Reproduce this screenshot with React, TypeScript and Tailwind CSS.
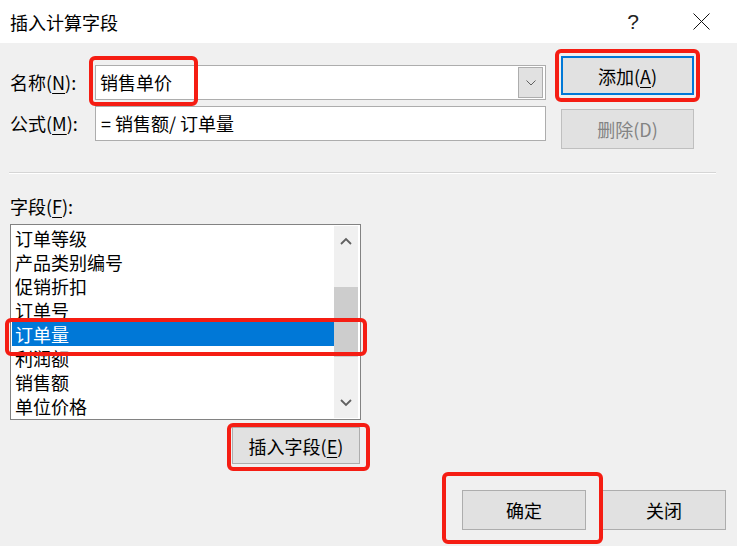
import React from "react";

const font = { fontFamily: '"Noto Sans CJK SC", "Noto Sans", sans-serif' };

function Chevron({ dir }: { dir: "up" | "down" }) {
  return (
    <svg width="12" height="8" viewBox="0 0 12 8">
      {dir === "up" ? (
        <path d="M1 7 L6 2 L11 7" fill="none" stroke="#606060" strokeWidth="1.8" />
      ) : (
        <path d="M1 1 L6 6 L11 1" fill="none" stroke="#606060" strokeWidth="1.8" />
      )}
    </svg>
  );
}

const items = ["订单等级", "产品类别编号", "促销折扣", "订单号", "订单量", "利润额", "销售额", "单位价格"];

function Red({ cls }: { cls: string }) {
  return <div className={"absolute border-[4px] border-[#f51d13] rounded-[6px] pointer-events-none " + cls} />;
}

export default function App() {
  return (
    <div className="w-[737px] h-[546px] bg-[#f0f0f0] relative overflow-hidden text-black text-[18px]" style={font}>
      {/* title bar */}
      <div className="h-[43px] bg-white flex items-center">
        <span className="pl-[10px] leading-[24px]">插入计算字段</span>
        <div className="ml-auto flex items-center">
          <span className="text-[21px] leading-[24px] text-[#222] mr-[54px] font-['Liberation_Sans',sans-serif] font-light">?</span>
          <svg width="17" height="17" viewBox="0 0 17 17" className="mr-[27px]">
            <path d="M0.5 0.5 L16.5 16.5 M16.5 0.5 L0.5 16.5" stroke="#111" strokeWidth="1" fill="none" />
          </svg>
        </div>
      </div>

      {/* name / formula section */}
      <div className="flex h-[129px]">
        <div className="pl-[10px] pt-[22px] flex flex-col gap-[6px]">
          <div className="flex items-center h-[35px]">
            <span className="w-[85px] leading-[24px] -mt-[2px]">
              名称(<span className="underline underline-offset-[3px]">N</span>):
            </span>
            <div className="w-[451px] h-[35px] bg-white border border-[#adadad] flex items-center">
              <span className="pl-[4px] leading-[24px] flex-1 -mt-[2px]">销售单价</span>
              <div className="w-[25px] h-[31px] mr-[2px] bg-[#e1e1e1] border border-[#adadad] flex items-center justify-center">
                <svg width="10" height="6" viewBox="0 0 10 6">
                  <path d="M0.5 0.5 L5 5 L9.5 0.5" fill="none" stroke="#606060" strokeWidth="1" />
                </svg>
              </div>
            </div>
          </div>
          <div className="flex items-center h-[35px]">
            <span className="w-[85px] leading-[24px] -mt-[2px]">
              公式(<span className="underline underline-offset-[3px]">M</span>):
            </span>
            <div className="w-[451px] h-[35px] bg-white border border-[#adadad] flex items-center">
              <span className="pl-[5px] leading-[24px] -mt-[2px]">= 销售额/ 订单量</span>
            </div>
          </div>
        </div>
        <div className="ml-[15px] pt-[13px] flex flex-col gap-[14px]">
          <div className="w-[133px] h-[39px] bg-[#e1e1e1] border-2 border-[#0078d7] flex items-center justify-center leading-[24px]">
            添加(<span className="underline underline-offset-[3px]">A</span>)
          </div>
          <div className="w-[133px] h-[40px] bg-[#e1e1e1] border border-[#bfbfbf] flex items-center justify-center leading-[24px] text-[#838383]">
            删除(D)
          </div>
        </div>
      </div>

      {/* separator */}
      <div className="ml-[9px] w-[707px] border-t border-[#d5d5d5]" />
      <div className="ml-[9px] w-[707px] border-t border-white" />

      {/* fields */}
      <div className="mt-[20px] pl-[10px] h-[24px] leading-[24px]">
        字段(<span className="underline underline-offset-[3px]">F</span>):
      </div>
      <div className="ml-[10px] mt-[6px] w-[351px] h-[196px] bg-white border border-[#828282] flex">
        <div className="flex-1 pl-[1px] pt-[1px] flex flex-col">
          {items.map((t, i) => (
            <div
              key={t}
              className={
                "h-[24px] leading-[24px] pl-[3px] whitespace-nowrap " +
                (i === 4 ? "bg-[#0078d7] text-white" : "")
              }
            >
              {t}
            </div>
          ))}
        </div>
        <div className="w-[24px] mr-[2px] my-[1px] bg-[#f0f0f0] flex flex-col">
          <div className="h-[30px] flex items-center justify-center">
            <Chevron dir="up" />
          </div>
          <div className="h-[31px]" />
          <div className="h-[70px] bg-[#cdcdcd]" />
          <div className="flex-1" />
          <div className="h-[30px] flex items-center justify-center">
            <Chevron dir="down" />
          </div>
        </div>
      </div>

      <div className="ml-[232px] mt-[7px] w-[128px] h-[37px] bg-[#e1e1e1] border border-[#adadad] flex items-center justify-center leading-[24px]">
        插入字段(<span className="underline underline-offset-[3px]">E</span>)
      </div>

      <div className="mt-[26px] ml-[462px] flex gap-[16px]">
        <div className="w-[124px] h-[40px] bg-[#e1e1e1] border border-[#adadad] flex items-center justify-center leading-[24px]">
          确定
        </div>
        <div className="w-[124px] h-[40px] bg-[#e1e1e1] border border-[#adadad] flex items-center justify-center leading-[24px]">
          关闭
        </div>
      </div>

      {/* red highlight overlays */}
      <Red cls="left-[89px] top-[56px] w-[109px] h-[50px]" />
      <Red cls="left-[555px] top-[49px] w-[145px] h-[53px]" />
      <Red cls="left-[5px] top-[318px] w-[362px] h-[38px]" />
      <Red cls="left-[227px] top-[423px] w-[143px] h-[48px]" />
      <Red cls="left-[442px] top-[472px] w-[161px] h-[72px]" />
    </div>
  );
}
